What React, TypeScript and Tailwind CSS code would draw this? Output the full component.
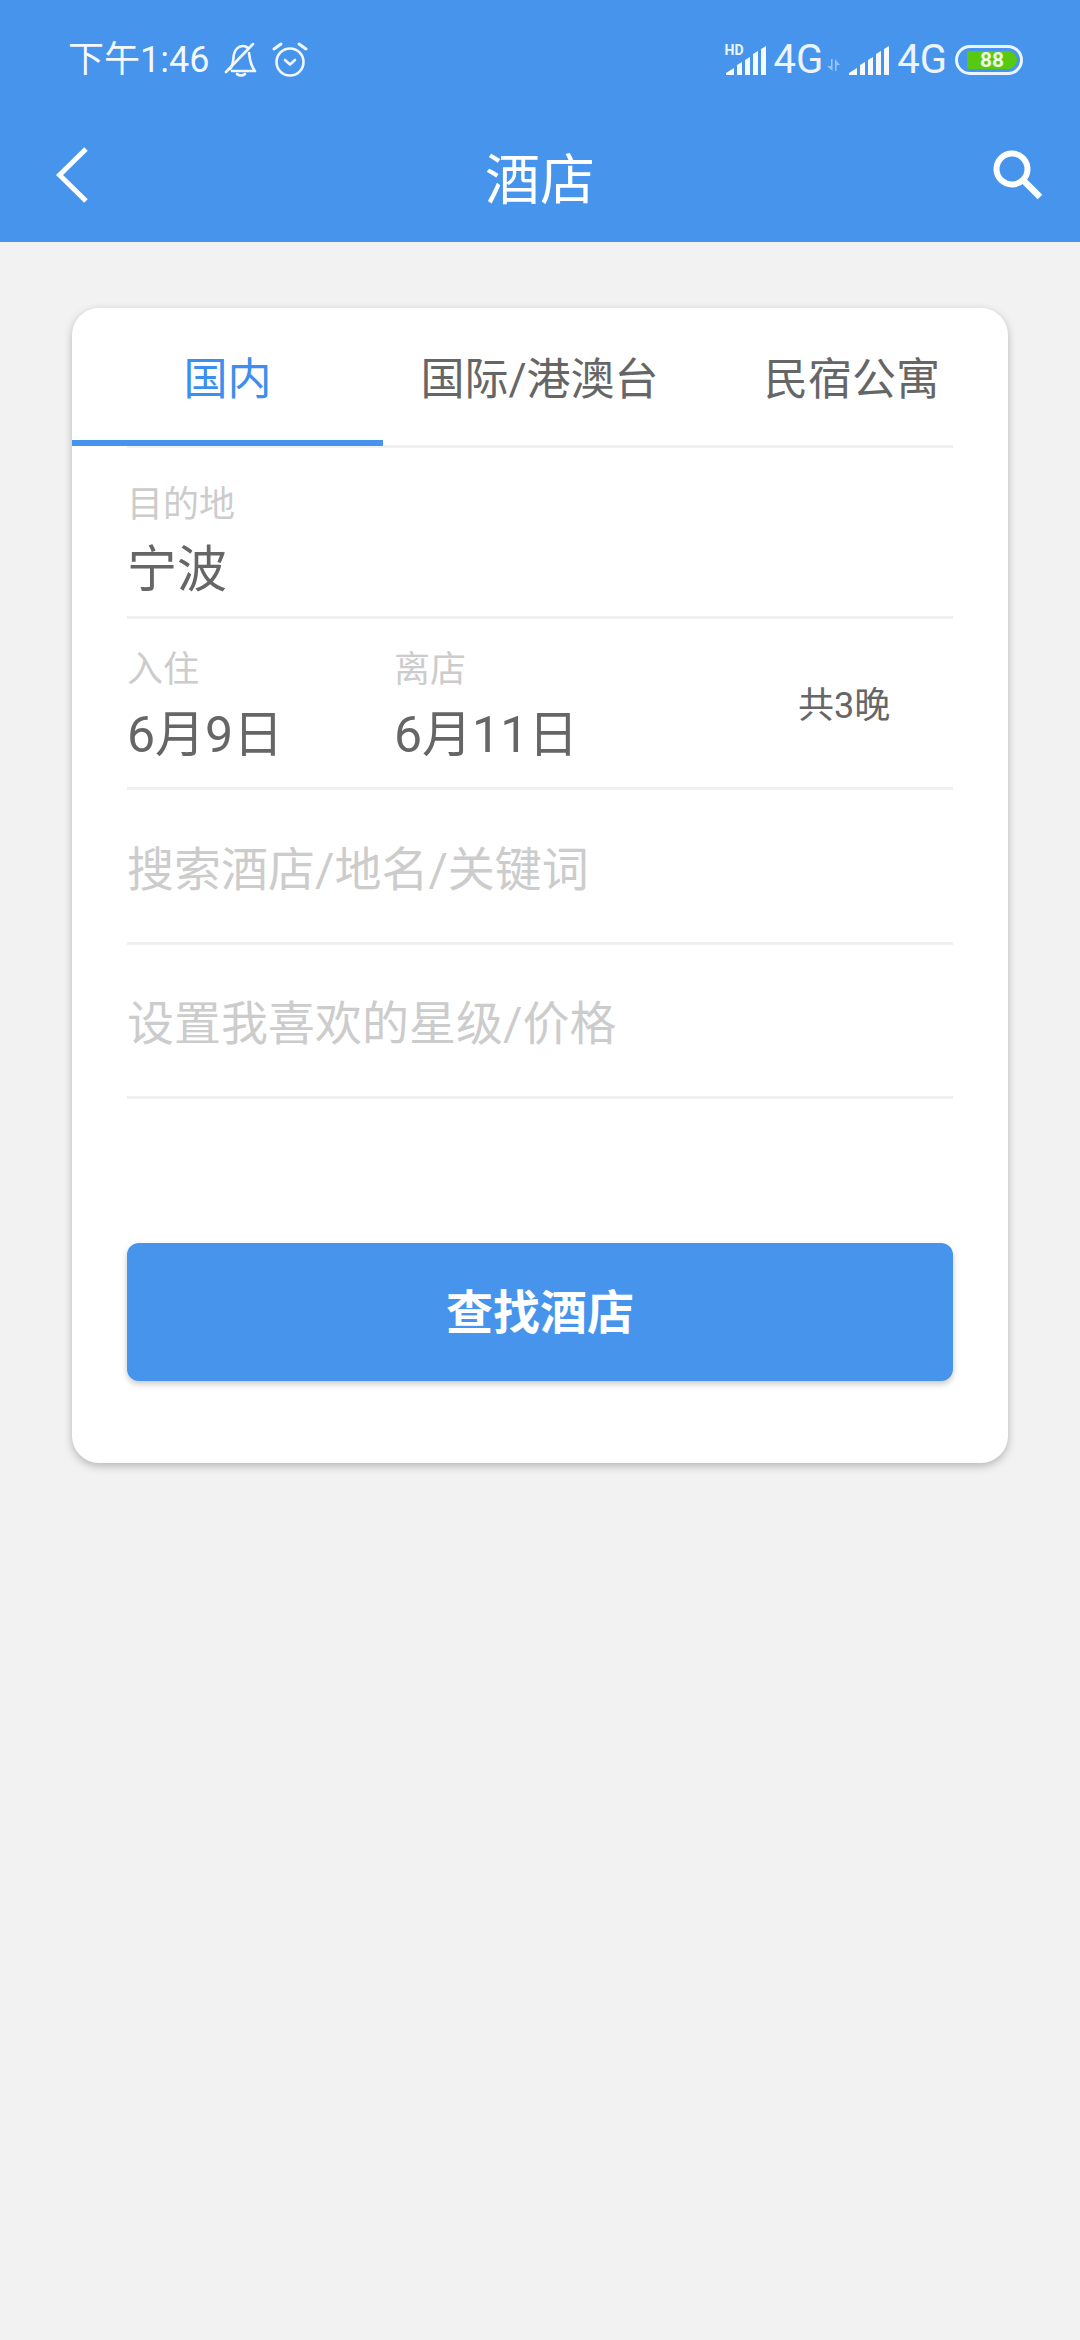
import React from "react";

const font = "font-['Roboto','Noto_Sans_CJK_SC',sans-serif]";

function Signal({ className = "" }: { className?: string }) {
  return (
    <svg width="40" height="29" viewBox="0 0 40 29" className={className}>
      <polygon points="0,29 8,29 8,22 0,27" fill="#fff" fillOpacity="0.95" />
      <polygon points="11,29 16,29 16,16 11,19" fill="#fff" fillOpacity="0.95" />
      <polygon points="19,29 24,29 24,11 19,14" fill="#fff" fillOpacity="0.95" />
      <polygon points="27,29 32,29 32,5 27,8" fill="#fff" fillOpacity="0.95" />
      <polygon points="35,29 40,29 40,0 35,3" fill="#fff" fillOpacity="0.95" />
    </svg>
  );
}

function Field({ children, h, className = "" }: { children: React.ReactNode; h: string; className?: string }) {
  return <div className={`border-b-[3px] border-[#f0f0f0] ${h} ${className}`}>{children}</div>;
}

export default function App() {
  return (
    <div className={`w-[1080px] h-[2340px] bg-[#f2f2f2] overflow-hidden ${font}`}>
      <header className="h-[242px] bg-[#4694ec] text-white relative">
        <div className="h-[118px] pl-[68px] pr-[57px] flex items-center justify-between pt-[2px]">
          <div className="flex items-center">
            <span className="text-[36px] leading-none text-white/95">下午1:46</span>
            <svg width="33" height="34" viewBox="0 0 33 34" fill="none" stroke="#fff" strokeOpacity="0.92" strokeWidth="2.6" className="ml-[15px]">
              <path d="M2 29 L29 1" strokeLinecap="round" />
              <path d="M6 26 C10 21 9 15 10 11 C11 6 15 3 19 3 C21 3 23 4 24 5 M25 10 C26 16 26 22 31 28 L8 28" strokeLinecap="round" strokeLinejoin="round" />
              <path d="M13 31 C15 33 19 33 21 31" strokeLinecap="round" />
            </svg>
            <svg width="36" height="36" viewBox="0 0 36 36" fill="none" stroke="#fff" strokeOpacity="0.92" strokeWidth="2.6" className="ml-[15px]">
              <circle cx="18" cy="20" r="13.5" />
              <path d="M13 18 L18 22.5 L23 18" strokeLinecap="round" strokeLinejoin="round" />
              <path d="M2 7 L9 2 M34 7 L27 2" strokeLinecap="round" strokeWidth="3" />
            </svg>
          </div>
          <div className="flex items-center">
            <div className="relative flex items-center">
              <span className="absolute left-[-1px] top-[-3px] text-[14px] leading-none font-bold text-white/90">HD</span>
              <Signal />
            </div>
            <span className="ml-[8px] text-[40px] leading-none font-normal text-white/90">4G</span>
            <svg width="13" height="12" viewBox="0 0 13 12" className="ml-[4px] mt-[10px]" fill="#fff" fillOpacity="0.45">
              <path d="M0 7 L4 7 L4 0 L5.5 0 L5.5 12 Z" />
              <path d="M8 0 L13 6 L9.5 6 L9.5 12 L8 12 Z" />
            </svg>
            <Signal className="ml-[9px]" />
            <span className="ml-[8px] text-[40px] leading-none font-normal text-white/90">4G</span>
            <div className="ml-[8px] w-[68px] h-[30px] rounded-full border-[3px] border-white/90 flex items-center pl-[9px]">
              <div className="w-[50px] h-[18px] bg-[#57c911] rounded-r-[9px] rounded-l-[2px] flex items-center justify-center text-[21px] leading-none font-bold text-white/90">88</div>
            </div>
          </div>
        </div>
        <div className="h-[124px] flex items-center justify-between pl-[56px] pr-[37px] relative pb-[10px]">
          <svg width="32" height="56" viewBox="0 0 32 56" fill="none" stroke="#fff" strokeWidth="5">
            <path d="M30 2 L3.5 28 L30 54" />
          </svg>
          <h1 className="absolute inset-x-0 text-center text-[55px] leading-none font-normal pt-[10px]">酒店</h1>
          <svg width="50" height="50" viewBox="0 0 50 50" fill="none" stroke="#fff" strokeWidth="6">
            <circle cx="19" cy="19" r="15.5" />
            <path d="M30 30 L47 47" strokeWidth="6.5" />
          </svg>
        </div>
      </header>

      <main className="pt-[66px] pl-[72px]">
        <section className="w-[936px] h-[1155px] bg-white rounded-[27px] shadow-[0_3px_8px_rgba(0,0,0,0.25)] relative">
          <nav className="flex w-[936px] h-[138px] text-[44px] text-[#666666]">
            <div className="w-[311px] h-[138px] flex items-center justify-center border-b-[6px] border-[#4694ec] text-[#3a8ff0] relative z-10 pt-[12px]">国内</div>
            <div className="w-[313px] h-[138px] flex items-center justify-center pt-[6px]">国际/港澳台</div>
            <div className="w-[312px] h-[138px] flex items-center justify-center pt-[6px]">民宿公寓</div>
          </nav>
          <div className="pl-[55px] pr-[55px] -mt-[1px]">
            <div className="h-[3px] bg-[#f0f0f0]" />
            <Field h="h-[171px]" className="flex flex-col">
              <span className="text-[36px] leading-none text-[#cccccc] mt-[39px]">目的地</span>
              <span className="text-[50px] leading-none text-[#666666] mt-[22px]">宁波</span>
            </Field>
            <Field h="h-[171px]" className="flex items-start relative">
              <div className="w-[267px] flex flex-col">
                <span className="text-[36px] leading-none text-[#cccccc] mt-[33px]">入住</span>
                <span className="text-[50px] leading-none text-[#666666] mt-[22px]">6月9日</span>
              </div>
              <div className="w-[404px] flex flex-col">
                <span className="text-[36px] leading-none text-[#cccccc] mt-[33px]">离店</span>
                <span className="text-[50px] leading-none text-[#666666] mt-[22px]">6月11日</span>
              </div>
              <span className="text-[36px] leading-none text-[#666666] mt-[69px]">共3晚</span>
            </Field>
            <Field h="h-[155px]" className="flex items-center pt-[6px]">
              <span className="text-[47px] leading-none text-[#cccccc]">搜索酒店/地名/关键词</span>
            </Field>
            <Field h="h-[154px]" className="flex items-center pt-[6px]">
              <span className="text-[47px] leading-none text-[#cccccc]">设置我喜欢的星级/价格</span>
            </Field>
            <button className="mt-[144px] w-full h-[138px] rounded-[12px] bg-[#4694ec] text-white text-[47px] font-bold pt-[2px] shadow-[0_3px_6px_rgba(0,0,0,0.22)]">查找酒店</button>
          </div>
        </section>
      </main>
    </div>
  );
}
